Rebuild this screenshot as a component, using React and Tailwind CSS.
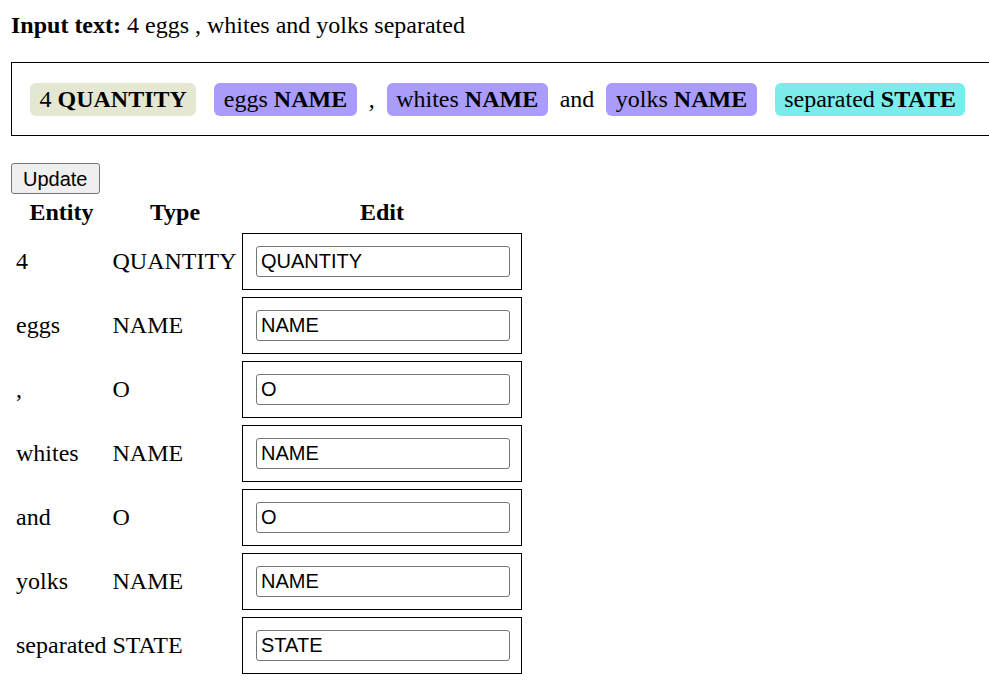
import React from 'react'

const tokens = [
  { text: '4', label: 'QUANTITY' },
  { text: 'eggs', label: 'NAME' },
  { text: ',', label: 'O' },
  { text: 'whites', label: 'NAME' },
  { text: 'and', label: 'O' },
  { text: 'yolks', label: 'NAME' },
  { text: 'separated', label: 'STATE' },
]

const markColors = {
  QUANTITY: 'bg-[#e4e7d2]',
  NAME: 'bg-[#aa9cfc]',
  STATE: 'bg-[#7aecec]',
}

const Mark = ({ text, label }) => (
  <span className={`${markColors[label]} mx-[6px] px-[9.5px] pt-[3px] pb-[4px] rounded-[6px] leading-none`}>
    {text} <b>{label}</b>
  </span>
)

export default function App() {
  return (
    <div className="overflow-x-hidden min-h-screen bg-white">
      <div className="font-['Liberation_Serif',serif] text-[24px] text-black px-[11px] pt-[11px] pb-4">
        {/* Input text */}
        <div className="leading-[28px]">
          <b>Input text:</b> 4 eggs , whites and yolks separated
        </div>

        {/* Entities */}
        <div className="mt-[23px] w-[1000px] border border-black px-3 py-[6px] leading-[60px] whitespace-nowrap">
          {tokens.map((t, i) =>
            t.label === 'O' ? (
              <React.Fragment key={i}>{t.text} </React.Fragment>
            ) : (
              <React.Fragment key={i}>
                <Mark text={t.text} label={t.label} />{' '}
              </React.Fragment>
            )
          )}
        </div>

        <button className="mt-[27px] block h-[31px] px-[11px] bg-[#efefef] border border-[#767676] rounded-[3px] font-['Liberation_Sans',Arial,sans-serif] text-[20px] leading-none text-black">
          Update
        </button>

        {/* Table */}
        <div className="mt-[4px] ml-[4px] grid grid-cols-[96px_131px_280px] grid-rows-[28px_repeat(7,57px)] gap-y-[7px]">
          <div className="text-center font-bold leading-[28px] pr-[3px]">Entity</div>
          <div className="text-center font-bold leading-[28px] pr-[3px]">Type</div>
          <div className="text-center font-bold leading-[28px]">Edit</div>

          {tokens.map((t, i) => (
            <React.Fragment key={i}>
              <div className="flex items-center pl-[1px] pb-[2px] whitespace-nowrap">{t.text}</div>
              <div className="flex items-center pl-[1.5px] pb-[2px] whitespace-nowrap">{t.label}</div>
              <div className="border border-black pl-[13px] pr-[11px] flex items-center">
                <input
                  type="text"
                  defaultValue={t.label}
                  className="w-full h-[31px] border border-[#767676] rounded-[3px] pl-[4px] font-['Liberation_Sans',Arial,sans-serif] text-[20px] text-black outline-none"
                />
              </div>
            </React.Fragment>
          ))}
        </div>
      </div>
    </div>
  )
}
